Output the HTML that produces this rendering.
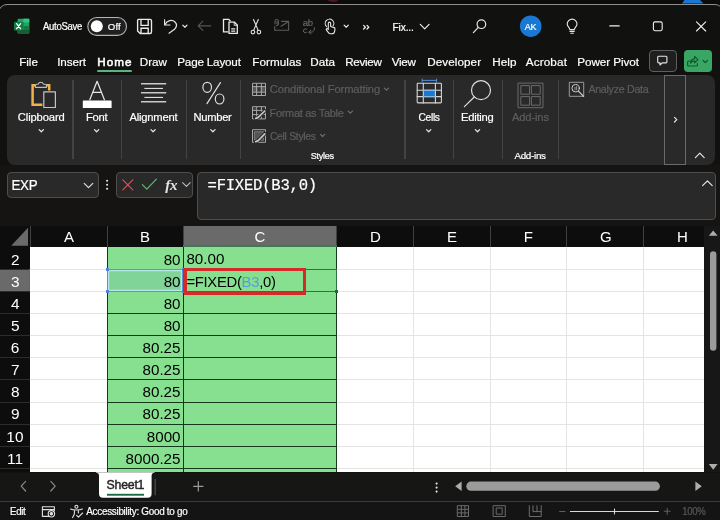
<!DOCTYPE html>
<html lang="en">
<head>
<meta charset="utf-8">
<title>Excel - FIXED function</title>
<style>
*{box-sizing:border-box;margin:0;padding:0}
html,body{width:720px;height:520px;overflow:hidden;background:#0b0b0b}
body{position:relative;font-family:"Liberation Sans",sans-serif;color:#fff}
.a{position:absolute}
.t{position:absolute;white-space:nowrap;line-height:20px;height:20px;-webkit-text-stroke:0.2px currentColor}
#win{left:-2.5px;top:3.6px;width:726px;height:540px;background:#11110f;border:1.5px solid #8e8e8e;border-radius:9px 9px 0 0}
#ribbon{left:7px;top:75px;width:708px;height:90px;background:#292929;border-radius:8px}
.sep{position:absolute;top:79.5px;width:1.5px;height:79.5px;background:#434343}
#fbar{left:0;top:165px;width:720px;height:61px;background:#161412}
.box{position:absolute;background:#292929;border:1px solid #4d4d4d;border-radius:4px}
#grid{left:0;top:225.7px;width:704px;height:246.8px;background:#fff;overflow:hidden}
#colhdr{left:0;top:0;width:704px;height:22px;background:#0f0f0f}
#rowhdr{left:0;top:22px;width:30px;height:230px;background:#0f0f0f}
.vl{position:absolute;width:1px;background:#e4e4e4;height:300px}
.hl{position:absolute;height:1px;background:#e4e4e4;left:30px;width:674px}
.hv{position:absolute;width:1px;background:#404040;top:0}
#green{left:107px;top:22px;width:230px;height:230px;background:#86e08f}
.gh{position:absolute;height:1px;background:#123a1a}
.gv{position:absolute;width:1px;background:#123a1a;height:300px}
#vscroll{left:704px;top:225.7px;width:16px;height:246.8px;background:#171717}
#tabbar{left:0;top:472.5px;width:720px;height:29px;background:#161615}
#status{left:0;top:500.9px;width:720px;height:20px;background:#141414;border-top:1px solid #3a3a3a}
svg{position:absolute;overflow:visible}
</style>
</head>
<body>
<div class="a" id="win"></div>
<!-- tab row -->
<div class="a" style="left:97px;top:70px;width:34.5px;height:2px;background:#5bb37e;border-radius:1px"></div>
<div class="box" style="left:648.5px;top:50px;width:28px;height:22px;background:#1f1f1f;border-color:#5e5e5e"></div>
<div class="a" style="left:683.5px;top:50px;width:28.5px;height:22px;background:#3aa663;border-radius:4px"></div>
<!-- ribbon -->
<div class="a" id="ribbon"></div>
<div class="sep" style="left:72.15px"></div>
<div class="sep" style="left:120.75px"></div>
<div class="sep" style="left:185.75px"></div>
<div class="sep" style="left:239.75px"></div>
<div class="sep" style="left:404.25px"></div>
<div class="sep" style="left:452.75px"></div>
<div class="sep" style="left:501.65px"></div>
<div class="sep" style="left:557.95px"></div>
<div class="a" style="left:664px;top:75px;width:22px;height:90px;border:1px solid #6a6a6a"></div>
<!-- formula bar -->
<div class="a" id="fbar"></div>
<div class="box" style="left:7px;top:172px;width:91.5px;height:25.5px"></div>
<div class="box" style="left:115.9px;top:172px;width:76.9px;height:25.5px"></div>
<div class="box" style="left:197px;top:172px;width:518.5px;height:47.5px"></div>
<!-- grid -->
<div class="a" id="grid">
  <div class="a" style="left:0;top:0;width:704px;height:21.10px;background:#0d0d0d"></div>
<div class="a" style="left:183.3px;top:0;width:153.50px;height:21.10px;background:#6a6a6a"></div>
<div class="a" style="left:0;top:21.10px;width:30.4px;height:300px;background:#0d0d0d"></div>
<div class="a" style="left:0;top:43.63px;width:30.4px;height:22.13px;background:#6a6a6a"></div>
<div class="hl" style="top:43.13px"></div>
<div class="hl" style="top:65.26px"></div>
<div class="hl" style="top:87.39px"></div>
<div class="hl" style="top:109.52px"></div>
<div class="hl" style="top:131.65px"></div>
<div class="hl" style="top:153.78px"></div>
<div class="hl" style="top:175.91px"></div>
<div class="hl" style="top:198.04px"></div>
<div class="hl" style="top:220.17px"></div>
<div class="hl" style="top:242.30px"></div>
<div class="vl" style="left:106.70px;top:21.10px"></div>
<div class="vl" style="left:182.80px;top:21.10px"></div>
<div class="vl" style="left:336.30px;top:21.10px"></div>
<div class="vl" style="left:412.90px;top:21.10px"></div>
<div class="vl" style="left:489.90px;top:21.10px"></div>
<div class="vl" style="left:566.30px;top:21.10px"></div>
<div class="vl" style="left:643.20px;top:21.10px"></div>
<div class="hv" style="left:29.90px;height:21.10px"></div>
<div class="hv" style="left:106.70px;height:21.10px"></div>
<div class="hv" style="left:182.80px;height:21.10px"></div>
<div class="hv" style="left:336.30px;height:21.10px"></div>
<div class="hv" style="left:412.90px;height:21.10px"></div>
<div class="hv" style="left:489.90px;height:21.10px"></div>
<div class="hv" style="left:566.30px;height:21.10px"></div>
<div class="hv" style="left:643.20px;height:21.10px"></div>
<div class="a" style="left:0;top:43.13px;width:30.4px;height:1px;background:#2c2c2c"></div>
<div class="a" style="left:0;top:65.26px;width:30.4px;height:1px;background:#2c2c2c"></div>
<div class="a" style="left:0;top:87.39px;width:30.4px;height:1px;background:#2c2c2c"></div>
<div class="a" style="left:0;top:109.52px;width:30.4px;height:1px;background:#2c2c2c"></div>
<div class="a" style="left:0;top:131.65px;width:30.4px;height:1px;background:#2c2c2c"></div>
<div class="a" style="left:0;top:153.78px;width:30.4px;height:1px;background:#2c2c2c"></div>
<div class="a" style="left:0;top:175.91px;width:30.4px;height:1px;background:#2c2c2c"></div>
<div class="a" style="left:0;top:198.04px;width:30.4px;height:1px;background:#2c2c2c"></div>
<div class="a" style="left:0;top:220.17px;width:30.4px;height:1px;background:#2c2c2c"></div>
<div class="a" style="left:0;top:242.30px;width:30.4px;height:1px;background:#2c2c2c"></div>
<div class="a" style="left:107.2px;top:21.10px;width:229.60px;height:300px;background:#86e08f"></div>
<div class="gh" style="top:43.13px;left:107.2px;width:229.60px"></div>
<div class="gh" style="top:65.26px;left:107.2px;width:229.60px"></div>
<div class="gh" style="top:87.39px;left:107.2px;width:229.60px"></div>
<div class="gh" style="top:109.52px;left:107.2px;width:229.60px"></div>
<div class="gh" style="top:131.65px;left:107.2px;width:229.60px"></div>
<div class="gh" style="top:153.78px;left:107.2px;width:229.60px"></div>
<div class="gh" style="top:175.91px;left:107.2px;width:229.60px"></div>
<div class="gh" style="top:198.04px;left:107.2px;width:229.60px"></div>
<div class="gh" style="top:220.17px;left:107.2px;width:229.60px"></div>
<div class="gh" style="top:242.30px;left:107.2px;width:229.60px"></div>
<div class="gv" style="left:106.70px;top:21.10px"></div>
<div class="gv" style="left:182.80px;top:21.10px"></div>
<div class="gv" style="left:336.30px;top:21.10px"></div>
<div class="a" style="left:106.70px;top:43.33px;width:76.10px;height:23.43px;background:rgba(120,190,170,0.35);border:1.6px solid #5f93d6;box-shadow:inset 0 0 0 1.2px #b4e6ec"></div>
<div class="a" style="left:105.50px;top:42.13px;width:3.2px;height:3.2px;background:#4f83d4"></div>
<div class="a" style="left:105.50px;top:64.26px;width:3.2px;height:3.2px;background:#4f83d4"></div>
<div class="a" style="left:181.60px;top:42.13px;width:3.2px;height:3.2px;background:#4f83d4"></div>
<div class="a" style="left:181.60px;top:64.26px;width:3.2px;height:3.2px;background:#4f83d4"></div>
<div class="a" style="left:182.80px;top:42.93px;width:154.50px;height:23.33px;border:1.1px solid #2a7540"></div>
<div class="a" style="left:335.30px;top:64.36px;width:3px;height:3px;background:#1f6b35"></div>
<div class="a" style="left:183.8px;top:41.90px;width:122.4px;height:27.8px;border:3px solid #d42a2a"></div>
<svg width="30" height="22" style="left:0;top:0"><path d="M28 1.8 V19.8 H11.2z" fill="#6a6a6a"/></svg>
<div class="a" style="left:183.3px;top:19.50px;width:153.50px;height:1.6px;background:#3f7a52"></div>
<div class="a" style="left:28.80px;top:43.63px;width:1.6px;height:22.13px;background:#3f7a52"></div>
</div>
<div class="a" id="vscroll"></div>
<div class="a" id="tabbar"></div>
<svg width="720" height="520" viewBox="0 0 720 520" style="left:0;top:0"><path d="M95.8 472.3 H154.6 V472.8 A3 3 0 0 0 151.6 475.8 V493.8 A4 4 0 0 1 147.6 497.8 H103 A4 4 0 0 1 99 493.8 V475.8 A3 3 0 0 0 96 472.8 Z" fill="#fff"/><rect x="107" y="493.8" width="37" height="1.9" fill="#1d6b40"/></svg>
<div class="a" id="status"></div>
<svg width="720" height="520" viewBox="0 0 720 520" style="left:0;top:0" fill="none" stroke-linecap="round" stroke-linejoin="round">
<!-- desktop peeking above window -->
<path d="M684.5 0 L682 3.6 H703.5 L700 0z" fill="#1a78d2"/>
<ellipse cx="333" cy="-1" rx="6" ry="3" fill="#4a1820"/>
<!-- excel logo -->
<g>
<rect x="17.5" y="18.7" width="11.8" height="14.8" rx="1.2" fill="#21a366"/>
<rect x="23.4" y="18.7" width="5.9" height="3.7" fill="#33c481"/>
<rect x="17.5" y="22.4" width="5.9" height="3.7" fill="#107c41"/>
<rect x="23.4" y="26.1" width="5.9" height="3.7" fill="#107c41"/>
<rect x="17.5" y="29.8" width="11.8" height="3.7" fill="#185c37"/>
<rect x="14" y="21.7" width="9.2" height="8.9" rx="1" fill="#107c41"/>
<path d="M16.6 23.6 L20.6 28.7 M20.6 23.6 L16.6 28.7" stroke="#fff" stroke-width="1.3"/>
</g>
<!-- autosave toggle -->
<rect x="87.8" y="17.5" width="38.7" height="17.9" rx="8.95" fill="#202020" stroke="#b4b4b4" stroke-width="1.1"/>
<circle cx="96.8" cy="26.3" r="6" fill="#fff"/>
<!-- save -->
<g stroke="#ececec" stroke-width="1.35" stroke-linejoin="miter">
<path d="M138.6 19.4 H150 a1.5 1.5 0 0 1 1.5 1.5 V32 a1.5 1.5 0 0 1 -1.5 1.5 H140.2 L137.6 31 V20.4 a1 1 0 0 1 1 -1z"/>
<path d="M141 19.6 V25.3 H148.2 V19.6"/>
<path d="M141 33.3 V28.2 H148.2 V33.3"/>
</g>
<!-- undo -->
<g stroke="#e6e6e6" stroke-width="1.2">
<path d="M164.6 19.8 V25 H170"/>
<path d="M165 24.6 C167 20.5 172 19 175 22 C177.5 24.5 176.5 27.5 174.5 29.3 L169 33.2"/>
<path d="M182.8 25.1 L184.9 27.2 L187 25.1" stroke-width="1.25"/>
</g>
<!-- back arrow (disabled) -->
<path d="M210.7 25.8 H198.2 M202.8 21.2 L198.2 25.8 L202.8 30.4" stroke="#555" stroke-width="1.2"/>
<!-- copy -->
<g stroke="#ececec" stroke-width="1.3" stroke-linejoin="miter" stroke-linecap="butt">
<path d="M228.4 31.8 H223.5 V19.3 H228.6 L230.6 21.3"/>
<path d="M229 22.2 H234.4 L237.3 25.1 V33.4 H229 Z" fill="#11110f"/>
<path d="M231.2 28.9 H235.2 M231.2 31.1 H235.2" stroke-width="1.1"/>
<path d="M234.2 22.4 V25.3 H237.2" stroke-width="0.9"/>
</g>
<!-- scissors -->
<g stroke="#e6e6e6" stroke-width="1.1">
<path d="M253.5 19.5 L258.2 30.4 M258.3 19.5 L253.6 30.4"/>
<circle cx="252.9" cy="32.1" r="1.8"/><circle cx="258.9" cy="32.1" r="1.8"/>
</g>
<!-- envelope w/ clip (disabled) -->
<g stroke="#5c5c5c" stroke-width="1.1">
<path d="M281.5 21.4 H288.6 V30.3 H274.7 V26.5"/>
<path d="M288.2 21.8 L281 26.2"/>
<path d="M275 24 V21.2 a1.7 1.7 0 0 1 3.4 0 V24.2 a2.7 2.7 0 0 1 -2 1.6 M277 21.6 V23.8"/>
</g>
<!-- abc replace (disabled) -->
<g stroke="#666" stroke-width="1">
<path d="M306.6 29.2 a2 2 0 1 0 0 3.2"/>
<path d="M314.4 27.6 a3.6 3.6 0 0 1 -3.4 4.6 H309 M310.8 30.2 L308.8 32.2 L310.8 34.2"/>
</g>
<!-- touch mode -->
<g stroke="#e6e6e6" stroke-width="1.1">
<path d="M326.6 26.6 a4.3 4.3 0 1 1 6.4 -0.6"/>
<path d="M328.3 29.5 V23.3 a1.15 1.15 0 0 1 2.3 0 V26.4 L333.6 27.4 a1.8 1.8 0 0 1 1.4 1.9 L334.6 31.4 a2.8 2.8 0 0 1 -2.8 2.4 H330.6 a2.6 2.6 0 0 1 -2.2 -1.2 L326.2 29.6 a1 1 0 0 1 1.6 -0.8z"/>
<path d="M344.1 25.1 L346.2 27.2 L348.3 25.1" stroke-width="1.25"/>
</g>
<!-- more >> -->
<path d="M363.6 25.4 L365.4 27.2 L363.6 29 M367 25.4 L368.8 27.2 L367 29" stroke="#eee" stroke-width="1.25"/>
<!-- title chevron -->
<path d="M420.3 24.4 L424.7 28.8 L429.1 24.4" stroke="#eee" stroke-width="1.2"/>
<!-- search -->
<g stroke="#e6e6e6" stroke-width="1.2">
<circle cx="481.4" cy="24.2" r="4.3"/><path d="M478.3 27.3 L473.4 32.6"/>
</g>
<!-- account -->
<circle cx="530.7" cy="26.2" r="10.8" fill="#1a78d2"/>
<!-- bulb -->
<g stroke="#e6e6e6" stroke-width="1.1">
<path d="M569.8 29.6 C569.8 27.6 567.2 26.6 567.2 24 a4.9 4.9 0 0 1 9.8 0 C577 26.6 574.4 27.6 574.4 29.6 z"/>
<path d="M570 31.4 H574.2 M570.8 33.2 H573.4"/>
</g>
<!-- window controls -->
<g stroke="#f0f0f0" stroke-width="1.1">
<path d="M609.8 25.9 H619.2"/>
<rect x="653.4" y="21.9" width="8.8" height="8.8" rx="1.6"/>
<path d="M696.5 21.8 L705.7 31 M705.7 21.8 L696.5 31"/>
</g>
<!-- comments -->
<path d="M658.6 56.3 H666 a0.9 0.9 0 0 1 .9 .9 V62 a0.9 0.9 0 0 1 -.9 .9 H662.2 L660 65 V62.9 H658.6 a0.9 0.9 0 0 1 -.9 -.9 V57.2 a0.9 0.9 0 0 1 .9 -.9z" stroke="#e6e6e6" stroke-width="1.1"/>
<!-- share -->
<g stroke="#0d5a2e" stroke-width="1.2">
<path d="M690.4 61 H688.6 a1 1 0 0 0 -1 1 V65 a1 1 0 0 0 1 1 H696.4 a1 1 0 0 0 1 -1 V63.6"/>
<path d="M690.6 63.2 C690.8 60.4 692.4 58.8 694.6 58.8 V56.4 L698 59.6 L694.6 62.8 V60.8 C693 60.8 691.6 61.6 690.6 63.2z"/>
<path d="M703.2 60.5 L705.3 62.6 L707.4 60.5" stroke-width="1.25"/>
</g>
<!-- clipboard -->
<g>
<path d="M35.6 85.3 H32.6 V104.8 H42.4" stroke="#f0b24c" stroke-width="2.5" stroke-linecap="butt" stroke-linejoin="miter"/>
<path d="M46.2 85.3 H49.2 V90.6" stroke="#f0b24c" stroke-width="2.5" stroke-linecap="butt" stroke-linejoin="miter"/>
<path d="M35.4 87.4 V85.4 a1.2 1.2 0 0 1 1.2 -1.2 H38.2 a2.7 2.7 0 0 1 5.2 0 H45.2 a1.2 1.2 0 0 1 1.2 1.2 V87.4z" stroke="#bdbdbd" stroke-width="1.1"/>
<rect x="43.8" y="91.9" width="11.6" height="15.6" stroke="#c4c4c4" stroke-width="1.2"/>
</g>
<!-- font -->
<path d="M89.8 99.8 L97.1 81.3 L104.4 99.8 M92.8 92.4 H101.4" stroke="#e8e8e8" stroke-width="1.2"/>
<rect x="82.8" y="100.4" width="28.8" height="7.6" rx="0.6" fill="#fff"/>
<!-- alignment -->
<g stroke-linecap="butt">
<path d="M141 83.8 H166.2 M141 92.8 H166.2 M141 101.8 H166.2" stroke="#c9c9c9" stroke-width="1.5"/>
<path d="M144.4 88.4 H163 M144.4 97.4 H163" stroke="#f2f2f2" stroke-width="1"/>
</g>
<!-- number -->
<g stroke="#dedede" stroke-width="1.2">
<ellipse cx="207.2" cy="87.3" rx="4.3" ry="5"/>
<ellipse cx="219.6" cy="99" rx="4.3" ry="5"/>
<path d="M220.4 82.6 L207 103.6"/>
</g>
<!-- conditional formatting (disabled) -->
<g stroke="#a8a8a8" stroke-width="1" stroke-linecap="butt">
<rect x="253.2" y="87" width="11.6" height="4.8" fill="#5a5a5a" stroke="none"/>
<rect x="257.4" y="87.2" width="3.4" height="4.4" fill="#3a3a3a" stroke="none"/>
<rect x="252.5" y="83.3" width="13" height="12.2"/>
<path d="M252.5 86.6 H265.5 M252.5 92.2 H265.5 M256.6 83.3 V95.5 M261.4 83.3 V95.5"/>
</g>
<!-- format as table (disabled) -->
<g stroke="#a8a8a8" stroke-width="1" stroke-linecap="butt">
<rect x="252.5" y="106.7" width="13" height="12.2"/>
<path d="M252.5 110.4 H265.5 M252.5 114.6 H265.5 M256.6 106.7 V118.9 M261.4 106.7 V118.9"/>
<rect x="253.2" y="107.4" width="3" height="2.6" fill="#4a4a4a" stroke="none"/>
<path d="M265 110.8 L258.2 117.4 L255.6 118.6" stroke="#292929" stroke-width="3.6" stroke-linecap="round"/>
<path d="M264.8 111 L258.2 117.4 L255.8 118.4" stroke="#c6c6c6" stroke-width="1.7" stroke-linecap="round"/>
</g>
<!-- cell styles (disabled) -->
<g stroke="#a8a8a8" stroke-width="1" stroke-linecap="butt">
<rect x="252.5" y="129.7" width="13" height="12.6"/>
<rect x="254.4" y="131.8" width="9.2" height="8.4" fill="#555" stroke="#8a8a8a" stroke-width="0.8"/>
<path d="M265 133.6 L258.2 140.6 L255.6 141.8" stroke="#292929" stroke-width="3.6" stroke-linecap="round"/>
<path d="M264.8 133.8 L258.2 140.6 L255.8 141.6" stroke="#c6c6c6" stroke-width="1.7" stroke-linecap="round"/>
</g>
<!-- cells -->
<g stroke="#d6d6d6" stroke-width="1.1">
<rect x="423.3" y="90.3" width="12.1" height="6.3" fill="#1a78d2" stroke="none"/>
<rect x="417.2" y="83.3" width="24.2" height="19.6" rx="0.8"/>
<path d="M417.2 90.2 H441.4 M417.2 96.6 H441.4 M423.3 83.3 V102.9 M435.4 83.3 V102.9"/>
<path d="M422.2 80.4 H436.6 M422.2 79 V81.8 M436.6 79 V81.8" stroke="#4a90d9" stroke-width="1"/>
<path d="M423.3 90.2 H435.4 M423.3 96.6 H435.4" stroke="#7db8ee" stroke-width="1"/>
</g>
<!-- editing -->
<g stroke="#dedede" stroke-width="1.2">
<circle cx="481" cy="90.2" r="9.5"/><path d="M474.2 97 L464.4 106.6"/>
</g>
<!-- add-ins (disabled) -->
<g stroke="#6a6a6a" stroke-width="1">
<rect x="518.4" y="83.1" width="24.6" height="24.6"/>
<rect x="521.2" y="85.6" width="8.4" height="8.6"/><rect x="531.8" y="85.6" width="8.4" height="8.6"/>
<rect x="521.2" y="96.6" width="8.4" height="8.6"/><rect x="531.8" y="96.6" width="8.4" height="8.6"/>
</g>
<!-- analyze data -->
<g stroke="#a0a0a0" stroke-width="1">
<rect x="569.7" y="82.3" width="14" height="14" stroke="#9a9a9a"/>
<circle cx="575.6" cy="88.2" r="3.7" stroke="#d0d0d0" fill="#292929"/>
<path d="M578.4 91.2 L583.6 96.4" stroke="#d0d0d0" stroke-width="1.2"/>
<path d="M575 89.8 V87.4 M576.6 89.8 V86.6" stroke-width="0.9"/>
</g>
<!-- ribbon chevrons -->
<path d="M39.15 129.65 L41.30 131.80 L43.45 129.65" stroke="#e6e6e6" stroke-width="1.25"/>
<path d="M94.45 129.65 L96.60 131.80 L98.75 129.65" stroke="#e6e6e6" stroke-width="1.25"/>
<path d="M150.95 129.65 L153.10 131.80 L155.25 129.65" stroke="#e6e6e6" stroke-width="1.25"/>
<path d="M210.75 129.65 L212.90 131.80 L215.05 129.65" stroke="#e6e6e6" stroke-width="1.25"/>
<path d="M426.55 129.65 L428.70 131.80 L430.85 129.65" stroke="#e6e6e6" stroke-width="1.25"/>
<path d="M475.35 129.65 L477.50 131.80 L479.65 129.65" stroke="#e6e6e6" stroke-width="1.25"/>
<path d="M384.35 88.05 L386.50 90.20 L388.65 88.05" stroke="#6e6e6e" stroke-width="1.2"/>
<path d="M348.15 111.05 L350.30 113.20 L352.45 111.05" stroke="#6e6e6e" stroke-width="1.2"/>
<path d="M320.45 134.35 L322.60 136.50 L324.75 134.35" stroke="#6e6e6e" stroke-width="1.2"/>
<path d="M674.5 117.4 L676.8 119.7 L674.5 122" stroke="#e6e6e6" stroke-width="1.2"/>
<path d="M695.4 157.6 L699.8 153.2 L704.2 157.6" stroke="#e6e6e6" stroke-width="1.2"/>
<!-- formula bar -->
<path d="M84.2 183.4 L88.5 187.7 L92.8 183.4" stroke="#e0e0e0" stroke-width="1.2"/>
<g fill="#e8e8e8"><circle cx="107.1" cy="180.7" r="1.05"/><circle cx="107.1" cy="184.7" r="1.05"/><circle cx="107.1" cy="188.7" r="1.05"/></g>
<path d="M122.8 179.8 L132.8 189.8 M132.8 179.8 L122.8 189.8" stroke="#d9534f" stroke-width="1.2"/>
<path d="M142.4 184.6 L146.8 189.2 L156.4 179.2" stroke="#5fba6a" stroke-width="1.2"/>
<path d="M182.6 182.6 L186.4 186.4 L190.2 182.6" stroke="#bdbdbd" stroke-width="1.1"/>
<path d="M702.6 185.6 L707.4 180.8 L712.2 185.6" stroke="#e6e6e6" stroke-width="1.2"/>
<!-- vertical scrollbar -->
<path d="M708.8 235.8 L713.2 230.4 L717.6 235.8z" fill="#adadad"/>
<rect x="710" y="251.2" width="6.4" height="99.6" rx="3.2" fill="#9c9c9c"/>
<path d="M708.8 464 L713.2 469.8 L717.6 464z" fill="#adadad"/>
<!-- sheet nav -->
<path d="M25.6 481.4 L21.2 486.2 L25.6 491" stroke="#8a8a8a" stroke-width="1.2"/>
<path d="M50.8 481.4 L55.2 486.2 L50.8 491" stroke="#8a8a8a" stroke-width="1.2"/>
<path d="M155.2 479 V495.2" stroke="#484848" stroke-width="1.4" stroke-linecap="butt"/>
<path d="M193.6 486.3 H203 M198.3 481.6 V491" stroke="#9a9a9a" stroke-width="1.2"/>
<!-- horizontal scrollbar -->
<g fill="#e8e8e8"><circle cx="436.6" cy="483.6" r="1.05"/><circle cx="436.6" cy="487.6" r="1.05"/><circle cx="436.6" cy="491.6" r="1.05"/></g>
<path d="M461.6 481.4 L455.2 486.2 L461.6 491z" fill="#adadad"/>
<rect x="466.3" y="481.6" width="193.6" height="9.2" rx="4.6" fill="#9c9c9c"/>
<path d="M695.4 481.4 L701.8 486.2 L695.4 491z" fill="#adadad"/>
<!-- status bar icons -->
<g stroke="#e0e0e0" stroke-width="1.1">
<path d="M49 516.4 H42.4 V506.8 H54.4 V510.4 M42.4 509.6 H54.4"/>
<circle cx="51.4" cy="513.8" r="3.2"/><circle cx="51.4" cy="513.8" r="1.2" fill="#e0e0e0"/>
<circle cx="76.4" cy="506.8" r="1.5"/>
<path d="M70.6 509 C73 510.4 79.8 510.4 82.4 509 M74.4 510.6 V514 L72.6 517.6 M78.4 510.6 V513"/>
<path d="M76.6 515.4 L78.4 517.2 L82.6 513"/>
</g>
<g stroke="#6c6c6c" stroke-width="1">
<rect x="457.7" y="505.7" width="10.8" height="10.8"/><path d="M461.3 505.7 V516.5 M464.9 505.7 V516.5 M457.7 509.3 H468.5 M457.7 512.9 H468.5"/>
<rect x="493.5" y="505.7" width="11.8" height="10.8"/><rect x="496.6" y="508" width="5.6" height="6.2"/>
<path d="M529.3 505.7 V516.5 H541.2 V505.7 M533 505.7 V511.6 H541.2 M537 505.7 V511.6"/>
</g>
<path d="M559.2 511.5 H565.4" stroke="#5e5e5e" stroke-width="1.1" stroke-linecap="butt"/>
<path d="M570 511.5 H658.8" stroke="#d8d8d8" stroke-width="1.1" stroke-linecap="butt"/>
<path d="M614.5 508.6 V514.4" stroke="#d8d8d8" stroke-width="1.1" stroke-linecap="butt"/>
<path d="M663.8 511.3 H670.6 M667.2 507.9 V514.7" stroke="#5e5e5e" stroke-width="1.1" stroke-linecap="butt"/>
</svg>

<div id="txt" class="a" style="left:0;top:0;width:720px;height:520px;will-change:transform">
<span class="t" style="left:43.00px;top:17.20px;font-size:9.56px;letter-spacing:-0.300px;color:#fff;transform:scaleY(1.046);transform-origin:0 13.00px;">AutoSave</span>
<span class="t" style="left:107.82px;top:16.80px;font-size:9.60px;letter-spacing:0.168px;color:#fff;transform:scaleY(1.000);transform-origin:0 13.00px;">Off</span>
<span class="t" style="left:392.48px;top:17.60px;font-size:10.20px;letter-spacing:-0.137px;color:#fff;transform:scaleY(1.000);transform-origin:0 13.00px;">Fix...</span>
<span class="t" style="left:524.80px;top:16.90px;font-size:8.97px;letter-spacing:-0.300px;color:#fff;transform:scaleY(1.093);transform-origin:0 13.00px;">AK</span>
<span class="t" style="left:302.82px;top:13.20px;font-size:9.55px;letter-spacing:-0.300px;color:#666;transform:scaleY(1.005);transform-origin:0 13.00px;">ab</span>
<span class="t" style="left:19.26px;top:52.40px;font-size:11.70px;letter-spacing:-0.065px;color:#fff;transform:scaleY(1.000);transform-origin:0 14.00px;">File</span>
<span class="t" style="left:57.15px;top:52.40px;font-size:11.70px;letter-spacing:-0.087px;color:#fff;transform:scaleY(1.000);transform-origin:0 14.00px;">Insert</span>
<span class="t" style="left:97.26px;top:52.40px;font-size:11.70px;letter-spacing:0.983px;color:#fff;transform:scaleY(1.000);transform-origin:0 14.00px;-webkit-text-stroke:0.55px currentColor;">Home</span>
<span class="t" style="left:139.76px;top:52.40px;font-size:11.70px;letter-spacing:-0.053px;color:#fff;transform:scaleY(1.000);transform-origin:0 14.00px;">Draw</span>
<span class="t" style="left:177.26px;top:52.40px;font-size:11.70px;letter-spacing:-0.199px;color:#fff;transform:scaleY(1.000);transform-origin:0 14.00px;">Page Layout</span>
<span class="t" style="left:252.26px;top:52.40px;font-size:11.70px;letter-spacing:0.047px;color:#fff;transform:scaleY(1.000);transform-origin:0 14.00px;">Formulas</span>
<span class="t" style="left:310.26px;top:52.40px;font-size:11.70px;letter-spacing:-0.008px;color:#fff;transform:scaleY(1.000);transform-origin:0 14.00px;">Data</span>
<span class="t" style="left:345.27px;top:52.40px;font-size:11.63px;letter-spacing:-0.300px;color:#fff;transform:scaleY(1.006);transform-origin:0 14.00px;">Review</span>
<span class="t" style="left:391.70px;top:52.40px;font-size:11.68px;letter-spacing:-0.300px;color:#fff;transform:scaleY(1.002);transform-origin:0 14.00px;">View</span>
<span class="t" style="left:427.26px;top:52.40px;font-size:11.70px;letter-spacing:0.070px;color:#fff;transform:scaleY(1.000);transform-origin:0 14.00px;">Developer</span>
<span class="t" style="left:492.26px;top:52.40px;font-size:11.70px;letter-spacing:0.032px;color:#fff;transform:scaleY(1.000);transform-origin:0 14.00px;">Help</span>
<span class="t" style="left:525.70px;top:52.40px;font-size:11.70px;letter-spacing:0.159px;color:#fff;transform:scaleY(1.000);transform-origin:0 14.00px;">Acrobat</span>
<span class="t" style="left:577.26px;top:52.40px;font-size:11.70px;letter-spacing:-0.071px;color:#fff;transform:scaleY(1.000);transform-origin:0 14.00px;">Power Pivot</span>
<span class="t" style="left:17.84px;top:107.00px;font-size:11.20px;letter-spacing:-0.119px;color:#fff;transform:scaleY(1.000);transform-origin:0 14.00px;">Clipboard</span>
<span class="t" style="left:86.00px;top:107.00px;font-size:11.20px;letter-spacing:-0.246px;color:#fff;transform:scaleY(1.000);transform-origin:0 14.00px;">Font</span>
<span class="t" style="left:129.40px;top:107.00px;font-size:11.20px;letter-spacing:-0.191px;color:#fff;transform:scaleY(1.000);transform-origin:0 14.00px;">Alignment</span>
<span class="t" style="left:193.50px;top:107.00px;font-size:11.20px;letter-spacing:-0.299px;color:#fff;transform:scaleY(1.000);transform-origin:0 14.00px;">Number</span>
<span class="t" style="left:418.39px;top:108.00px;font-size:10.27px;letter-spacing:-0.300px;color:#fff;transform:scaleY(1.091);transform-origin:0 13.00px;">Cells</span>
<span class="t" style="left:461.00px;top:107.00px;font-size:11.20px;letter-spacing:-0.237px;color:#fff;transform:scaleY(1.000);transform-origin:0 14.00px;">Editing</span>
<span class="t" style="left:511.90px;top:107.00px;font-size:11.20px;letter-spacing:-0.140px;color:#5e5e5e;transform:scaleY(1.000);transform-origin:0 14.00px;">Add-ins</span>
<span class="t" style="left:269.84px;top:79.20px;font-size:11.20px;letter-spacing:-0.104px;color:#5e5e5e;transform:scaleY(1.000);transform-origin:0 14.00px;">Conditional Formatting</span>
<span class="t" style="left:269.52px;top:102.50px;font-size:10.99px;letter-spacing:-0.300px;color:#5e5e5e;transform:scaleY(1.019);transform-origin:0 14.00px;">Format as Table</span>
<span class="t" style="left:269.88px;top:126.80px;font-size:10.40px;letter-spacing:-0.300px;color:#5e5e5e;transform:scaleY(1.077);transform-origin:0 13.00px;">Cell Styles</span>
<span class="t" style="left:588.40px;top:79.20px;font-size:10.69px;letter-spacing:-0.300px;color:#5e5e5e;transform:scaleY(1.048);transform-origin:0 14.00px;">Analyze Data</span>
<span class="t" style="left:310.84px;top:146.40px;font-size:9.12px;letter-spacing:-0.300px;color:#fff;transform:scaleY(1.074);transform-origin:0 13.00px;">Styles</span>
<span class="t" style="left:514.40px;top:146.40px;font-size:9.80px;letter-spacing:-0.272px;color:#fff;transform:scaleY(1.000);transform-origin:0 13.00px;">Add-ins</span>
<span class="t" style="left:11.43px;top:176.30px;font-size:13.39px;letter-spacing:-0.300px;color:#fff;transform:scaleY(1.090);transform-origin:0 14.00px;">EXP</span>
<span class="t" style="left:207.52px;top:176.00px;font-size:15.60px;letter-spacing:-0.242px;color:#fff;transform:scaleY(1.000);transform-origin:0 14.00px;font-family:'Liberation Mono',monospace;">=FIXED(B3,0)</span>
<span class="t" style="left:165.20px;top:174.80px;font-size:15.13px;letter-spacing:-0.300px;color:#e4e4e4;transform:scaleY(1.025);transform-origin:0 15.00px;font-weight:700;font-family:'Liberation Serif',serif;font-style:italic;-webkit-text-stroke:0;">fx</span>
<span class="t" style="left:63.98px;top:227.30px;font-size:15.00px;letter-spacing:0.000px;color:#fff;transform:scaleY(1.000);transform-origin:0 15.00px;-webkit-text-stroke:0;">A</span>
<span class="t" style="left:139.95px;top:227.30px;font-size:15.00px;letter-spacing:0.000px;color:#fff;transform:scaleY(1.000);transform-origin:0 15.00px;-webkit-text-stroke:0;">B</span>
<span class="t" style="left:254.45px;top:227.30px;font-size:15.00px;letter-spacing:0.000px;color:#fff;transform:scaleY(1.000);transform-origin:0 15.00px;-webkit-text-stroke:0;">C</span>
<span class="t" style="left:370.10px;top:227.30px;font-size:15.00px;letter-spacing:0.000px;color:#fff;transform:scaleY(1.000);transform-origin:0 15.00px;-webkit-text-stroke:0;">D</span>
<span class="t" style="left:446.88px;top:227.30px;font-size:15.00px;letter-spacing:0.000px;color:#fff;transform:scaleY(1.000);transform-origin:0 15.00px;-webkit-text-stroke:0;">E</span>
<span class="t" style="left:523.65px;top:227.30px;font-size:15.00px;letter-spacing:0.000px;color:#fff;transform:scaleY(1.000);transform-origin:0 15.00px;-webkit-text-stroke:0;">F</span>
<span class="t" style="left:600.10px;top:227.30px;font-size:15.00px;letter-spacing:0.000px;color:#fff;transform:scaleY(1.000);transform-origin:0 15.00px;-webkit-text-stroke:0;">G</span>
<span class="t" style="left:676.92px;top:227.30px;font-size:15.00px;letter-spacing:0.000px;color:#fff;transform:scaleY(1.000);transform-origin:0 15.00px;-webkit-text-stroke:0;">H</span>
<span class="t" style="left:10.89px;top:249.50px;font-size:15.40px;letter-spacing:0.000px;color:#fff;transform:scaleY(1.000);transform-origin:0 15.00px;-webkit-text-stroke:0;">2</span>
<span class="t" style="left:10.96px;top:271.63px;font-size:15.40px;letter-spacing:0.000px;color:#fff;transform:scaleY(1.000);transform-origin:0 15.00px;-webkit-text-stroke:0;">3</span>
<span class="t" style="left:10.96px;top:293.76px;font-size:15.40px;letter-spacing:0.000px;color:#fff;transform:scaleY(1.000);transform-origin:0 15.00px;-webkit-text-stroke:0;">4</span>
<span class="t" style="left:10.89px;top:315.89px;font-size:15.40px;letter-spacing:0.000px;color:#fff;transform:scaleY(1.000);transform-origin:0 15.00px;-webkit-text-stroke:0;">5</span>
<span class="t" style="left:10.81px;top:338.02px;font-size:15.40px;letter-spacing:0.000px;color:#fff;transform:scaleY(1.000);transform-origin:0 15.00px;-webkit-text-stroke:0;">6</span>
<span class="t" style="left:10.89px;top:360.15px;font-size:15.40px;letter-spacing:0.000px;color:#fff;transform:scaleY(1.000);transform-origin:0 15.00px;-webkit-text-stroke:0;">7</span>
<span class="t" style="left:10.89px;top:382.28px;font-size:15.40px;letter-spacing:0.000px;color:#fff;transform:scaleY(1.000);transform-origin:0 15.00px;-webkit-text-stroke:0;">8</span>
<span class="t" style="left:10.96px;top:404.41px;font-size:15.40px;letter-spacing:0.000px;color:#fff;transform:scaleY(1.000);transform-origin:0 15.00px;-webkit-text-stroke:0;">9</span>
<span class="t" style="left:6.37px;top:426.54px;font-size:15.40px;letter-spacing:0.000px;color:#fff;transform:scaleY(1.000);transform-origin:0 15.00px;-webkit-text-stroke:0;">10</span>
<span class="t" style="left:7.02px;top:448.67px;font-size:15.40px;letter-spacing:0.000px;color:#fff;transform:scaleY(1.000);transform-origin:0 15.00px;-webkit-text-stroke:0;">11</span>
<span class="t" style="left:163.64px;top:249.50px;font-size:15.20px;letter-spacing:0.000px;color:#000;transform:scaleY(1.000);transform-origin:0 15.00px;-webkit-text-stroke:0;">80</span>
<span class="t" style="left:163.64px;top:271.63px;font-size:15.20px;letter-spacing:0.000px;color:#000;transform:scaleY(1.000);transform-origin:0 15.00px;-webkit-text-stroke:0;">80</span>
<span class="t" style="left:163.64px;top:293.76px;font-size:15.20px;letter-spacing:0.000px;color:#000;transform:scaleY(1.000);transform-origin:0 15.00px;-webkit-text-stroke:0;">80</span>
<span class="t" style="left:163.64px;top:315.89px;font-size:15.20px;letter-spacing:0.000px;color:#000;transform:scaleY(1.000);transform-origin:0 15.00px;-webkit-text-stroke:0;">80</span>
<span class="t" style="left:142.51px;top:338.02px;font-size:15.20px;letter-spacing:0.000px;color:#000;transform:scaleY(1.000);transform-origin:0 15.00px;-webkit-text-stroke:0;">80.25</span>
<span class="t" style="left:142.51px;top:360.15px;font-size:15.20px;letter-spacing:0.000px;color:#000;transform:scaleY(1.000);transform-origin:0 15.00px;-webkit-text-stroke:0;">80.25</span>
<span class="t" style="left:142.51px;top:382.28px;font-size:15.20px;letter-spacing:0.000px;color:#000;transform:scaleY(1.000);transform-origin:0 15.00px;-webkit-text-stroke:0;">80.25</span>
<span class="t" style="left:142.51px;top:404.41px;font-size:15.20px;letter-spacing:0.000px;color:#000;transform:scaleY(1.000);transform-origin:0 15.00px;-webkit-text-stroke:0;">80.25</span>
<span class="t" style="left:146.74px;top:426.54px;font-size:15.20px;letter-spacing:0.000px;color:#000;transform:scaleY(1.000);transform-origin:0 15.00px;-webkit-text-stroke:0;">8000</span>
<span class="t" style="left:125.61px;top:448.67px;font-size:15.20px;letter-spacing:0.000px;color:#000;transform:scaleY(1.000);transform-origin:0 15.00px;-webkit-text-stroke:0;">8000.25</span>
<span class="t" style="left:186.39px;top:249.40px;font-size:15.20px;letter-spacing:0.000px;color:#000;transform:scaleY(1.000);transform-origin:0 15.00px;-webkit-text-stroke:0;">80.00</span>
<span class="t" style="left:186.41px;top:271.60px;font-size:14.84px;letter-spacing:-0.300px;color:#000;transform:scaleY(1.024);transform-origin:0 15.00px;-webkit-text-stroke:0;">=FIXED(<span style="color:#5b9bd5">B3</span>,0)</span>
<span class="t" style="left:106.51px;top:475.40px;font-size:12.30px;letter-spacing:-0.205px;color:#262626;transform:scaleY(1.000);transform-origin:0 14.00px;-webkit-text-stroke:0.45px currentColor;">Sheet1</span>
<span class="t" style="left:10.03px;top:502.40px;font-size:9.66px;letter-spacing:-0.300px;color:#fff;transform:scaleY(1.035);transform-origin:0 13.00px;">Edit</span>
<span class="t" style="left:86.30px;top:502.40px;font-size:9.93px;letter-spacing:-0.300px;color:#fff;transform:scaleY(1.007);transform-origin:0 13.00px;">Accessibility: Good to go</span>
<span class="t" style="left:682.13px;top:502.40px;font-size:9.60px;letter-spacing:-0.300px;color:#585858;transform:scaleY(1.042);transform-origin:0 13.00px;">100%</span>
</div>
</body>
</html>
